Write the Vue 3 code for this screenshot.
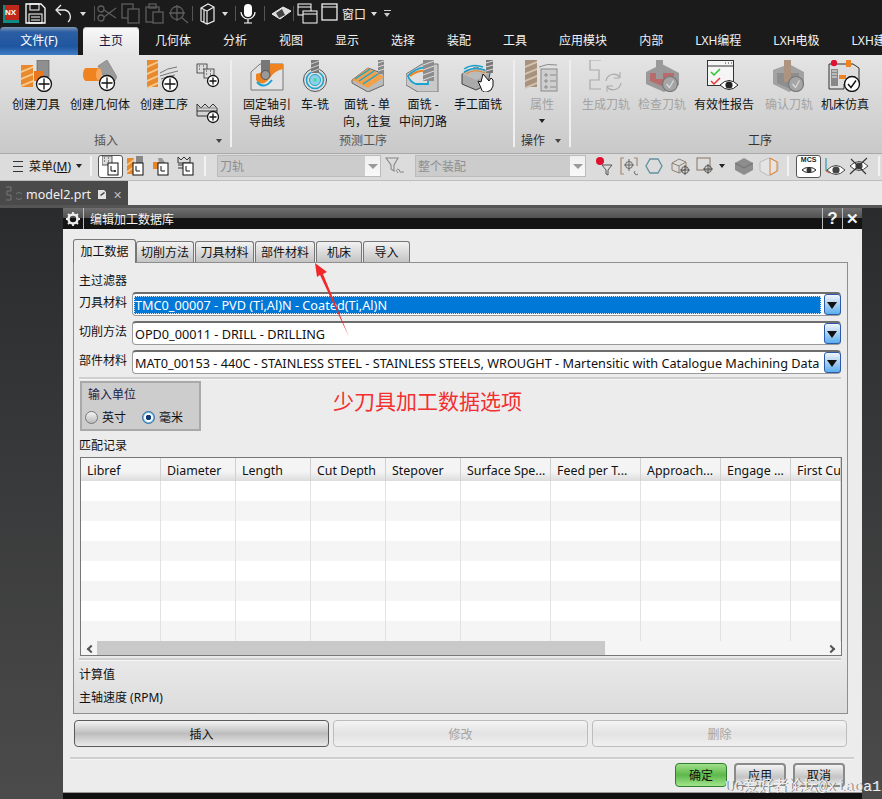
<script setup>
const plus = (x, y, r = 7.5) => `<circle cx="${x}" cy="${y}" r="${r}" fill="#fff" stroke="#111" stroke-width="1.3"/><path d="M${x - r + 2} ${y}H${x + r - 2}M${x} ${y - r + 2}V${y + r - 2}" stroke="#111" stroke-width="1.3"/>`
const check = (x, y, r = 7.5) => `<circle cx="${x}" cy="${y}" r="${r}" fill="#fff" stroke="#111" stroke-width="1.3"/><path d="M${x - 4} ${y}l3 3.5l5-7" fill="none" stroke="#111" stroke-width="1.4"/>`
const grayCheck = (x, y, r = 7.5) => `<circle cx="${x}" cy="${y}" r="${r}" fill="#a5a5a5" stroke="#777" stroke-width="1.2"/><path d="M${x - 3.5} ${y}l3 3.5l4-7" fill="none" stroke="#ddd" stroke-width="1.2"/>`
const mill = (x, y, w, h, c1 = '#e8892b', c2 = '#f8c98c') => {
  let s = `<rect x="${x}" y="${y}" width="${w}" height="${h}" fill="${c1}"/>`
  for (let i = 3; i < h - 2; i += 7) {
    s += `<path d="M${x} ${y + i + 3}L${x + w} ${y + i - 2}V${y + i}L${x} ${y + i + 5}z" fill="${c2}"/>`
  }
  return s
}
const eye = (x, y, c = '#222') => `<path d="M${x - 9} ${y}Q${x} ${y - 9} ${x + 9} ${y}Q${x} ${y + 9} ${x - 9} ${y}z" fill="#fff" stroke="${c}" stroke-width="1"/><circle cx="${x}" cy="${y}" r="3.6" fill="${c}"/>`
const sheet = (x, y) => `<rect x="${x}" y="${y}" width="10" height="9" fill="#ddd" stroke="#333" stroke-width=".8"/><path d="M${x + 2} ${y + 2}h1M${x + 6} ${y + 2}h1M${x + 2} ${y + 5}h1M${x + 6} ${y + 5}h1" stroke="#333"/>`

const icons = {
  createTool: '<g transform="translate(2 0)">' + mill(0, 5, 12, 22) + '<rect x="16" y="0" width="12" height="17" fill="#8f8f8f" stroke="#555" stroke-width=".6"/><path d="M13 11h9v10h-9z" fill="#e8771e"/></g>' + plus(25, 24),
  createGeom: '<path d="M15 6l9-6l10 17l-7 12z" fill="#9b9b9b" stroke="#777" stroke-width=".6"/><path d="M3 8h13a3 7 0 0 1 0 13H3a3 6.5 0 0 1 0-13z" fill="#ef8320"/><ellipse cx="16" cy="14.500" rx="3" ry="6.500" fill="#f7a75c"/>' + plus(24, 23),
  createOp: mill(0, 0, 11, 27) + '<path d="M13 13Q20 8 30 7M13 16Q22 13 31 11M14 19Q22 16 28 15" stroke="#777" fill="none"/>' + plus(23, 24),
  smallSheet: `<path d="M1 1h11v9h9v6h-9v-6h-11z" fill="#ddd"/>` + sheet(1, 1) + sheet(8, 6) + plus(17, 18, 5.500),
  smallCrown: `<path d="M1 5l4 4l4-4l4 4l4-4l4 4V17H1z" fill="none" stroke="#333"/><path d="M1 12h20" stroke="#333"/><path d="M1 9h20" stroke="#888"/>` + plus(17, 18, 5.500),
  contour: '<path d="M1 12L10 4h23v26H1z" fill="#e3e3e3" stroke="#777"/><path d="M6 20Q12 28 20 18Q24 11 33 9V4H18Q14 13 6 14z" fill="#ef8320"/><path d="M7 22Q14 30 22 20" stroke="#1ba3d0" fill="none" stroke-width="2"/><rect x="11" y="0" width="9" height="13" fill="#777"/><circle cx="15.500" cy="15" r="4.500" fill="#999" stroke="#555"/>',
  turnMill: '<g transform="translate(4 0)"><circle cx="13" cy="20" r="11.500" fill="#ddd" stroke="#555"/><circle cx="13" cy="20" r="8.500" fill="none" stroke="#1ba3d0" stroke-width="1.600"/><circle cx="13" cy="20" r="5.500" fill="#8fd0e8" stroke="#1ba3d0"/><circle cx="13" cy="20" r="2" fill="#4da"/><rect x="9" y="0" width="8" height="13" fill="#777"/><path d="M9 4l8-3M9 8l8-3M9 12l8-3" stroke="#ccc"/></g>',
  faceSingle: '<path d="M2 20l16-12l16 6v11l-16 7l-16-9z" fill="#bbb" stroke="#666"/><path d="M2 20l16 8l16-11L18 8z" fill="#f0a14a"/><path d="M5 19L20 9M9 21L24 11M13 24L28 14" stroke="#1ba3d0" stroke-width="1.500"/><rect x="28" y="0" width="6" height="14" fill="#888"/><path d="M28 3l6-2M28 7l6-2M28 11l6-2" stroke="#ddd"/>',
  faceMid: '<path d="M0 14L16 4h16v28H12L0 25z" fill="#c9c9c9" stroke="#777"/><path d="M2 16Q12 6 22 8V24H10Q4 22 2 16z" fill="#e0e0e0" stroke="#1ba3d0" stroke-width="1.800"/><path d="M4 16Q12 10 20 11" stroke="#ef8320" stroke-width="2" fill="none"/><rect x="17" y="0" width="11" height="21" fill="#8c8c8c"/><path d="M17 5l11-4M17 10l11-4M17 15l11-4M17 20l11-4" stroke="#ddd"/>',
  faceManual: '<path d="M1 14l14-7l14 6l-2 11l-12 6L1 24z" fill="#aaa" stroke="#444"/><path d="M1 14l14 6l14-7l-14-6z" fill="#bbb"/><path d="M3 9Q12 3 22 7M3 12Q12 6 24 10" stroke="#1ba3d0" stroke-width="1.500" fill="none"/><path d="M5 14Q14 8 24 13" stroke="#ef8320" fill="none"/><rect x="25" y="0" width="7" height="13" fill="#777"/><path d="M25 3l7-2M25 7l7-2M25 11l7-2" stroke="#ddd"/><path d="M22 14l6 7l2-3l2 2v6q-1 5-6 6t-6-4l-3-7l3 1z" fill="#fff" stroke="#111"/>',
  attrib: mill(0, 0, 12, 27, '#a8917d', '#d2c4b4') + '<rect x="16" y="9" width="16" height="22" fill="#cfcfcf" stroke="#8a8a8a"/><path d="M20 14h2v2h-2zM20 20h2v2h-2zM20 26h2v2h-2zM25 15h6M25 21h6M25 27h6M14 7Q22 3 32 5" stroke="#8a8a8a" fill="none"/>',
  genPath: '<path d="M12 0H1v10h9v10H1v9h11" fill="none" stroke="#a9a9a9" stroke-width="1.200"/><path d="M17 21a8 8 0 0 1 14-4M32 23a8 8 0 0 1-14 4" fill="none" stroke="#a9a9a9" stroke-width="1.200"/><path d="M31 12v6h-6M18 32v-6h6" fill="none" stroke="#a9a9a9"/>',
  verify: '<path d="M1 12l16-8l17 9v12l-15 7L1 24z" fill="#9a9a9a"/><path d="M5 13h24v8l-12 5l-12-5z" fill="#b96b6b"/><rect x="11" y="0" width="7" height="19" fill="#9a9a9a"/>' + grayCheck(25, 24),
  report: '<rect x=".5" y=".5" width="26" height="25" fill="#f5f5f5" stroke="#333"/><path d="M1 6h25M18 3h1M21 3h1M24 3h1" stroke="#333"/><path d="M4 12l3 3l6-6" fill="none" stroke="#28c628" stroke-width="1.500"/><path d="M4 21l3 3l6-6" fill="none" stroke="#e33" stroke-width="1.500"/>' + eye(22, 25),
  confirm: '<path d="M1 10l16-6l15 8v13l-15 7L1 24z" fill="#a2a2a2"/><path d="M5 13h22v10l-11 5l-11-5z" fill="#8e8e8e"/><rect x="12" y="0" width="7" height="22" fill="#ad9480"/>' + grayCheck(24, 24),
  machine: '<path d="M1 4h24l6 4v16H16v5H1z" fill="#ddd" stroke="#333"/><rect x="3" y="9" width="7" height="17" fill="#888"/><path d="M4 11h5M4 14h5M4 17h5" stroke="#eee"/><circle cx="6" cy="3" r="3.200" fill="#e01030"/><rect x="18" y="0" width="5" height="7" fill="#ef8320"/><path d="M11 15h7v4h-7z" fill="#ef8320"/>' + check(24, 24),
  post: '<path d="M1 0h8M1 0v12h8M1 24h8" stroke="#aaa" fill="none"/>',

  logo: '<rect x="0" y="0" width="16" height="18" fill="#0f8a84"/><rect x="2" y="0" width="14" height="15" fill="#c0281c"/>',
  save: '<path d="M1 1h15l4 4v15H1z" fill="none" stroke="#fff" stroke-width="1.300"/><rect x="5" y="1" width="9" height="6" fill="none" stroke="#fff"/><rect x="4" y="11" width="13" height="9" fill="none" stroke="#fff"/><path d="M6 14h9M6 17h9" stroke="#fff"/>',
  undo: '<path d="M2 7h9a7 7 0 0 1 3 12" fill="none" stroke="#eee" stroke-width="1.300"/><path d="M7 2L2 7l5 5" fill="none" stroke="#eee" stroke-width="1.300"/>',
  cut: '<g fill="none" stroke="#5d5d5d" stroke-width="1.300"><circle cx="4" cy="6" r="3"/><circle cx="4" cy="15" r="3"/><path d="M7 7l12 8M7 14L19 5"/></g>',
  copy: '<g fill="none" stroke="#5d5d5d" stroke-width="1.300"><rect x="1" y="1" width="11" height="14"/><rect x="7" y="6" width="11" height="14" fill="#1b1b1b"/></g>',
  paste: '<g fill="none" stroke="#5d5d5d" stroke-width="1.300"><rect x="1" y="4" width="13" height="15"/><rect x="4" y="1" width="7" height="4"/><rect x="8" y="9" width="10" height="11" fill="#1b1b1b"/></g>',
  cross: '<g fill="none" stroke="#5d5d5d" stroke-width="1.300"><circle cx="9" cy="10" r="6.500"/><path d="M1 10h16M9 2v16M13 14l7 6"/></g>',
  box3d: '<path d="M4 5l7-4l6 3v14l-7 3l-6-3zM4 5l6 3v13M10 8l7-4M7 7v12" fill="none" stroke="#eee" stroke-width="1.200"/>',
  mic: '<rect x="7" y="1" width="8" height="13" rx="4" fill="#fff"/><path d="M4 9a7 7 0 0 0 14 0M11 16v4M7 20h8" fill="none" stroke="#fff" stroke-width="1.200"/>',
  eraser: '<path d="M2 11L13 4l8 4l-11 8z" fill="#ddd" stroke="#eee"/><path d="M6 10l6-4l3 6l-6 3zM2 13h3" fill="#444"/>',
  windows: '<rect x="1" y="1" width="13" height="11" fill="#1b1b1b" stroke="#fff"/><path d="M1 4h13" stroke="#fff"/><rect x="6" y="8" width="14" height="12" fill="#1b1b1b" stroke="#fff"/><path d="M6 11h14" stroke="#fff"/>',
  win: '<rect x="1" y="1" width="15" height="16" fill="none" stroke="#fff" stroke-width="1.200"/><path d="M1 4h15" stroke="#fff"/>',

  tbSheet: sheet(0, 0) + '<rect x="6" y="7" width="10" height="12" fill="#fff" stroke="#111"/><path d="M9 10v5h4" fill="none" stroke="#111"/><circle cx="13" cy="15" r="1" fill="#111"/>',
  tbMill: mill(0, 2, 7, 16) + '<rect x="9" y="0" width="7" height="9" fill="#888"/><rect x="6" y="7" width="10" height="12" fill="#fff" stroke="#111"/><path d="M9 10v5h4" fill="none" stroke="#111"/>',
  tbGeom: '<path d="M1 6h7v7H1z" fill="#ef8320"/><path d="M6 2l4 0l4 6v2H8z" fill="#999"/><rect x="6" y="7" width="10" height="12" fill="#fff" stroke="#111"/><path d="M9 10v5h4" fill="none" stroke="#111"/>',
  tbOp: '<path d="M1 1l3 3l3-3l3 3l3-3v6H1zM1 9h9M1 12h6" fill="none" stroke="#333"/><rect x="6" y="7" width="10" height="12" fill="#fff" stroke="#111"/><path d="M9 10v5h4" fill="none" stroke="#111"/>',
  filter: '<path d="M1 2h12l-4 7v6l-3-2V9z" fill="none" stroke="#888" stroke-width="1.100"/><path d="M12 13a3 3 0 0 1 3 3h4M13 17l-2-3" fill="none" stroke="#888"/>',
  redFilter: '<circle cx="5" cy="5" r="4" fill="#e01030"/><path d="M7 9h10l-4 5v5l-2-1v-4z" fill="#ddd" stroke="#555"/>',
  bracket: '<path d="M4 2H1v16h3M14 2h3v8" fill="none" stroke="#a38a75" stroke-width="1.200"/><circle cx="9" cy="9" r="3.500" fill="none" stroke="#666"/><path d="M9 3v12M4 9h10M15 15a2 2 0 1 0 3 3" stroke="#666" fill="none"/>',
  hex: '<path d="M5 3h8l4 7l-4 7H5l-4-7z" fill="none" stroke="#63909e" stroke-width="1.300"/>',
  boxPlus: '<path d="M2 7l7-4l7 3v7l-7 4l-7-3zM2 7l7 3l7-4M9 10v7" fill="none" stroke="#8f7f70"/><circle cx="15" cy="14" r="3.500" fill="none" stroke="#555"/><path d="M15 9v10M10 14h10" stroke="#555"/>',
  squarePlus: '<rect x="2" y="2" width="13" height="12" fill="none" stroke="#8f7f70" stroke-width="1.100"/><circle cx="13" cy="13" r="3.500" fill="none" stroke="#555"/><path d="M13 8v10M8 13h10" stroke="#555"/>',
  cubeDark: '<path d="M10 2l9 5v7l-9 5l-9-5V7z" fill="#8d8d8d"/><path d="M1 7l9 5l9-5" fill="none" stroke="#707070"/>',
  cubeOrange: '<path d="M10 2l9 4v9l-9 5l-9-5V6z" fill="#e4e4e4" stroke="#bbb"/><path d="M11 2l7 4v9l-7 4V9z" fill="none" stroke="#e0812c"/>',
  mcs: '<path d="M3 14a8 5 0 0 1 14 0a8 5 0 0 1-14 0z" fill="#fff" stroke="#222"/><circle cx="10" cy="14" r="2.500" fill="#333"/>',
  axisEye: '<path d="M3 2v13" stroke="#18a" /><path d="M3 15l8-5" stroke="#3a3"/><path d="M3 15l4 2" stroke="#d33"/>' + eye(13, 14, '#444'),
  crossEye: eye(11, 10, '#444') + '<path d="M2 18L19 2M3 3l15 15" stroke="#333" stroke-width="1.100"/>',
}

const quick = [
  { icon: 'save', w: 22, ml: 6 },
  { icon: 'undo', w: 22, ml: 7 },
  { caret: true, ml: 4 },
  { sep: true, ml: 8 },
  { icon: 'cut', w: 22, ml: 2 },
  { icon: 'copy', w: 20, ml: 2 },
  { icon: 'paste', w: 20, ml: 4 },
  { icon: 'cross', w: 21, ml: 3 },
  { sep: true, ml: 3 },
  { icon: 'box3d', w: 20, ml: 4 },
  { caret: true, ml: 5 },
  { sep: true, ml: 7 },
  { icon: 'mic', w: 22, ml: 1 },
  { sep: true, ml: 5 },
  { icon: 'eraser', w: 22, ml: 5 },
  { sep: true, ml: 1 },
  { icon: 'windows', w: 21, ml: 3 },
  { icon: 'win', w: 18, ml: 3 },
]

const menuTabs = ['几何体', '分析', '视图', '显示', '选择', '装配', '工具', '应用模块', '内部', 'LXH编程', 'LXH电极', 'LXH建模']

const groupTool = [
  { icon: 'createTool', label: '创建刀具', w: 64 },
  { icon: 'createGeom', label: '创建几何体', w: 64 },
  { icon: 'createOp', label: '创建工序', w: 64 },
]
const groupPredict = [
  { icon: 'contour', label: '固定轴引\n导曲线', w: 58 },
  { icon: 'turnMill', label: '车-铣', w: 38 },
  { icon: 'faceSingle', label: '面铣 - 单\n向，往复', w: 66 },
  { icon: 'faceMid', label: '面铣 -\n中间刀路', w: 46 },
  { icon: 'faceManual', label: '手工面铣', w: 64 },
]
const groupOps = [
  { icon: 'genPath', label: '生成刀轨', w: 56, off: true },
  { icon: 'verify', label: '检查刀轨', w: 56, off: true },
  { icon: 'report', label: '有效性报告', w: 68 },
  { icon: 'confirm', label: '确认刀轨', w: 62, off: true },
  { icon: 'machine', label: '机床仿真', w: 50 },
  { icon: 'post', label: '后处理', w: 60, off: true },
]

const barLeft = ['tbSheet', 'tbMill', 'tbGeom', 'tbOp']
const barRight = ['redFilter', 'bracket', 'hex', 'boxPlus', 'squarePlus']

const tabs = [
  { label: '加工数据', w: 63, active: true },
  { label: '切削方法', w: 58 },
  { label: '刀具材料', w: 59 },
  { label: '部件材料', w: 60 },
  { label: '机床', w: 46 },
  { label: '导入', w: 47 },
]
const filters = [
  { label: '刀具材料', value: 'TMC0_00007 - PVD (Ti,Al)N - Coated(Ti,Al)N', selected: true },
  { label: '切削方法', value: 'OPD0_00011 - DRILL - DRILLING' },
  { label: '部件材料', value: 'MAT0_00153 - 440C - STAINLESS STEEL - STAINLESS STEELS, WROUGHT - Martensitic with Catalogue Machining Data' },
]
const columns = [
  { label: 'Libref', w: 80 },
  { label: 'Diameter', w: 75 },
  { label: 'Length', w: 75 },
  { label: 'Cut Depth', w: 75 },
  { label: 'Stepover', w: 75 },
  { label: 'Surface Spe...', w: 90 },
  { label: 'Feed per T...', w: 90 },
  { label: 'Approach...', w: 80 },
  { label: 'Engage ...', w: 70 },
  { label: 'First Cu', w: 50 },
]
</script>

<template>
  <div class="app">
    <div class="quick">
      <svg class="logo" width="16" height="18" viewBox="0 0 16 18" v-html="icons.logo"></svg>
      <span class="logo-text">NX</span>
      <template v-for="(q, i) in quick" :key="i">
        <span v-if="q.sep" class="q-sep" :style="{ marginLeft: q.ml + 'px' }"></span>
        <span v-else-if="q.caret" class="caret light" :style="{ marginLeft: q.ml + 'px' }"></span>
        <svg v-else :width="q.w" height="22" :viewBox="`0 0 ${q.w} 22`" :style="{ marginLeft: q.ml + 'px' }" v-html="icons[q.icon]"></svg>
      </template>
      <span class="q-text">窗口</span>
      <span class="caret light q-caret"></span>
      <span class="q-custom"></span>
    </div>

    <div class="menu">
      <div class="file-tab">文件(F)</div>
      <div class="menu-home">主页</div>
      <div v-for="t in menuTabs" :key="t" class="menu-tab">{{ t }}</div>
    </div>

    <div class="ribbon">
      <section class="group g-insert">
        <div class="btns">
          <div v-for="b in groupTool" :key="b.label" class="rbtn" :style="{ width: b.w + 'px' }">
            <svg width="34" height="32" viewBox="0 0 34 32" v-html="icons[b.icon]"></svg>
            <span>{{ b.label }}</span>
          </div>
          <div class="small-col">
            <svg width="24" height="26" viewBox="0 0 24 26" v-html="icons.smallSheet"></svg>
            <svg width="24" height="26" viewBox="0 0 24 26" v-html="icons.smallCrown"></svg>
          </div>
        </div>
        <div class="g-label">插入<span class="caret g-caret"></span></div>
      </section>
      <section class="group g-predict">
        <div class="btns">
          <div v-for="b in groupPredict" :key="b.label" class="rbtn" :style="{ width: b.w + 'px' }">
            <svg width="34" height="32" viewBox="0 0 34 32" v-html="icons[b.icon]"></svg>
            <span>{{ b.label }}</span>
          </div>
        </div>
        <div class="g-label">预测工序</div>
      </section>
      <section class="group g-attr">
        <div class="btns">
          <div class="rbtn off attr-btn">
            <svg width="34" height="32" viewBox="0 0 34 32" v-html="icons.attrib"></svg>
            <span>属性</span>
            <span class="caret attr-caret"></span>
          </div>
        </div>
        <div class="g-label">操作<span class="caret g-caret"></span></div>
      </section>
      <section class="group g-ops">
        <div class="btns">
          <div v-for="b in groupOps" :key="b.label" class="rbtn" :class="{ off: b.off }" :style="{ width: b.w + 'px' }">
            <svg width="34" height="32" viewBox="0 0 34 32" v-html="icons[b.icon]"></svg>
            <span>{{ b.label }}</span>
          </div>
        </div>
        <div class="g-label">工序</div>
      </section>
    </div>

    <div class="toolbar">
      <span class="burger"></span>
      <span class="bar-menu">菜单(<u>M</u>)</span>
      <span class="caret bar-caret"></span>
      <span class="bar-sep sep-a"></span>
      <span v-for="(ic, i) in barLeft" :key="ic" class="bar-icon" :class="{ on: i === 0 }">
        <svg width="18" height="20" viewBox="0 0 18 20" v-html="icons[ic]"></svg>
      </span>
      <span class="bar-sep sep-b"></span>
      <div class="bar-combo c-one"><span>刀轨</span><i></i></div>
      <svg class="bar-filter" width="20" height="20" viewBox="0 0 20 20" v-html="icons.filter"></svg>
      <div class="bar-combo c-two"><span>整个装配</span><i></i></div>
      <span v-for="ic in barRight" :key="ic" class="bar-icon">
        <svg width="21" height="20" viewBox="0 0 21 20" v-html="icons[ic]"></svg>
      </span>
      <span class="caret bar-caret2"></span>
      <span class="bar-icon"><svg width="20" height="20" viewBox="0 0 20 20" v-html="icons.cubeDark"></svg></span>
      <span class="bar-icon"><svg width="20" height="20" viewBox="0 0 20 20" v-html="icons.cubeOrange"></svg></span>
      <span class="bar-sep sep-c"></span>
      <span class="bar-icon mcs">
        <b>MCS</b>
        <svg width="20" height="20" viewBox="0 0 20 20" v-html="icons.mcs"></svg>
      </span>
      <span class="bar-icon"><svg width="22" height="20" viewBox="0 0 22 20" v-html="icons.axisEye"></svg></span>
      <span class="bar-icon"><svg width="22" height="20" viewBox="0 0 22 20" v-html="icons.crossEye"></svg></span>
      <span class="bar-sep sep-d"></span>
    </div>

    <div class="doc-bar">
      <div class="doc-tab">
        <svg width="18" height="18" viewBox="0 0 18 18"><path d="M1 2h5v4H2v4h4v5H1M11 9a4 4 0 0 1 6 0M17 13a4 4 0 0 1-6 0" fill="none" stroke="#777"/></svg>
        <span class="doc-name">model2.prt</span>
        <svg width="10" height="11" viewBox="0 0 10 11"><path d="M1 1h6l2 2v7H1z" fill="#e4e4e4"/><path d="M3 6l4-3l1 1l-4 3z" fill="#444"/></svg>
        <span class="doc-close">✕</span>
      </div>
    </div>

    <main class="canvas">
      <div class="dialog">
        <header class="title">
          <span class="gear">
            <svg width="14" height="14" viewBox="0 0 14 14"><circle cx="7" cy="7" r="4.500" fill="none" stroke="#eee" stroke-width="2.600"/><path d="M7 0v3M7 11v3M0 7h3M11 7h3M2 2l2 2M10 10l2 2M12 2l-2 2M2 12l2-2" stroke="#eee" stroke-width="1.800"/></svg>
          </span>
          <span class="title-text">编辑加工数据库</span>
          <span class="title-btn help">?</span>
          <span class="title-btn close">✕</span>
        </header>

        <div class="body">
          <div class="tabs">
            <div v-for="t in tabs" :key="t.label" class="tab" :class="{ active: t.active }" :style="{ width: t.w + 'px' }">{{ t.label }}</div>
          </div>

          <div class="panel">
            <div class="section-label">主过滤器</div>
            <div v-for="f in filters" :key="f.label" class="filter-row">
              <label>{{ f.label }}</label>
              <div class="combo">
                <div class="combo-value" :class="{ selected: f.selected }">{{ f.value }}</div>
                <span class="combo-arrow"></span>
              </div>
            </div>
            <div class="rule"></div>

            <fieldset class="units">
              <div class="units-title">输入单位</div>
              <div class="units-row">
                <span class="radio"></span><span class="radio-label">英寸</span>
                <span class="radio checked"></span><span class="radio-label">毫米</span>
              </div>
            </fieldset>

            <div class="section-label match">匹配记录</div>

            <div class="table">
              <div class="thead">
                <div v-for="c in columns" :key="c.label" class="th" :style="{ width: c.w + 'px' }">{{ c.label }}</div>
              </div>
              <div v-for="r in 8" :key="r" class="tr" :class="{ even: r % 2 === 0 }">
                <div v-for="c in columns" :key="c.label" class="td" :style="{ width: c.w + 'px' }"></div>
              </div>
              <div class="hscroll">
                <span class="arrow-l"></span>
                <div class="thumb"></div>
                <span class="arrow-r"></span>
              </div>
            </div>
            <div class="rule rule-b"></div>

            <div class="calc">计算值</div>
            <div class="calc spindle">主轴速度 (RPM)</div>
          </div>

          <div class="actions">
            <button class="btn primary">插入</button>
            <button class="btn disabled">修改</button>
            <button class="btn disabled">删除</button>
          </div>
          <div class="rule rule-c"></div>
          <div class="footer">
            <button class="btn small ok">确定</button>
            <button class="btn small">应用</button>
            <button class="btn small">取消</button>
          </div>
        </div>
        <div class="dialog-end"></div>
      </div>
    </main>

    <!-- annotations drawn on top of the screenshot -->
    <svg class="arrow-note" width="40" height="78" viewBox="0 0 40 78">
      <path d="M2 1L14 10L10 12L36 75L7 13L4 15z" fill="#f0282a"/>
    </svg>
    <div class="note">少刀具加工数据选项</div>
    <div class="watermark">UG爱好者论坛@xiaoa1</div>
  </div>
</template>

<style scoped>
.app {
  position: relative;
  width: 882px;
  height: 799px;
  overflow: hidden;
  display: flex;
  flex-direction: column;
  background: #2d2e30;
  color: #111;
  font-family: "Noto Sans", "Noto Sans CJK SC", sans-serif;
  font-size: 12px;
}

/* top quick access */
.quick {
  position: relative;
  height: 27px;
  flex: none;
  display: flex;
  align-items: center;
  padding-left: 3px;
  background: #1b1b1b;
  color: #eee;
}
.logo-text {
  position: absolute;
  left: 5px;
  top: 7px;
  font: bold 8px/11px "Liberation Sans", sans-serif;
  color: #fff;
}
.q-sep {
  width: 1px;
  height: 15px;
  background: #555;
}
.q-text {
  margin-left: 3px;
  color: #eee;
}
.q-caret {
  margin-left: 5px;
}
.q-custom {
  margin-left: 7px;
  width: 7px;
  height: 6px;
  border-top: 1px solid #ccc;
  background: linear-gradient(#1b1b1b 2px, transparent 2px);
  position: relative;
}
.q-custom::after {
  content: "";
  position: absolute;
  left: 0;
  top: 2px;
  border: 3.5px solid transparent;
  border-top: 4px solid #ccc;
  border-bottom: 0;
}
.caret {
  display: inline-block;
  width: 0;
  height: 0;
  border-left: 3.5px solid transparent;
  border-right: 3.5px solid transparent;
  border-top: 4px solid #222;
}
.caret.light {
  border-top-color: #ddd;
}

/* menu tabs */
.menu {
  height: 28px;
  flex: none;
  display: flex;
  align-items: stretch;
  overflow: hidden;
  background: #1b1b1b;
  color: #f2f2f2;
  line-height: 28px;
}
.file-tab {
  flex: none;
  width: 78px;
  text-align: center;
  color: #fff;
  border-radius: 4px 4px 0 0;
  background: linear-gradient(#7e97b4, #2b5ea3 18%, #1f56a0 70%, #3f7ec4);
}
.menu-home {
  flex: none;
  margin-left: 5px;
  width: 56px;
  text-align: center;
  color: #16163c;
  border-radius: 4px 4px 0 0;
  background: linear-gradient(#f8f8f8, #e4e4e4);
  box-shadow: inset 0 1px 0 #bbb;
}
.menu-tab {
  flex: none;
  padding: 0 16px;
  white-space: nowrap;
}

/* ribbon */
.ribbon {
  height: 98px;
  flex: none;
  display: flex;
  overflow: hidden;
  background: linear-gradient(#e4e4e4, #c9c9c9);
}
.group {
  flex: none;
  display: flex;
  flex-direction: column;
  box-sizing: border-box;
  border-right: 2px solid #efefef;
  margin: 5px 0 6px;
}
.g-insert {
  width: 232px;
  padding-left: 4px;
}
.g-predict {
  width: 283px;
  padding-left: 6px;
}
.g-attr {
  width: 56px;
}
.g-ops {
  width: 371px;
  padding-left: 7px;
  border-right: 0;
}
.btns {
  flex: 1;
  display: flex;
  min-height: 0;
}
.rbtn {
  flex: none;
  display: flex;
  flex-direction: column;
  align-items: center;
  text-align: center;
  white-space: pre;
  line-height: 17px;
}
.rbtn svg {
  margin-bottom: 4px;
}
.rbtn.off {
  color: #a3a3a3;
}
.small-col {
  display: flex;
  flex-direction: column;
  gap: 10px;
  padding-top: 3px;
}
.attr-btn {
  width: 54px;
}
.attr-caret {
  margin-top: 6px;
}
.g-label {
  position: relative;
  flex: none;
  height: 14px;
  line-height: 16px;
  text-align: center;
  color: #555;
}
.g-insert .g-label {
  padding-right: 22px;
}
.g-predict .g-label {
  padding-right: 25px;
}
.g-attr .g-label {
  padding-right: 18px;
  color: #333;
}
.g-ops .g-label {
  color: #333;
}
.g-caret {
  position: absolute;
  right: 8px;
  top: 6px;
  border-top-color: #444;
}

/* second toolbar */
.toolbar {
  height: 28px;
  flex: none;
  display: flex;
  align-items: center;
  overflow: hidden;
  padding-bottom: 2px;
  border-top: 1px solid #a9a9a9;
  border-bottom: 1px solid #bdbdbd;
  box-sizing: border-box;
  background: #dcdcdc;
}
.burger {
  margin-left: 13px;
  width: 10px;
  height: 9px;
  flex: none;
  border-top: 1px solid #333;
  border-bottom: 1px solid #333;
  background: linear-gradient(#333, #333) center / 100% 1px no-repeat;
}
.bar-menu {
  margin-left: 6px;
  white-space: nowrap;
  flex: none;
}
.bar-caret {
  margin-left: 5px;
  flex: none;
}
.bar-sep {
  width: 2px;
  height: 20px;
  background: #f2f2f2;
  flex: none;
}
.sep-a {
  margin: 0 6px 0 8px;
}
.sep-b {
  margin-left: 6px;
  margin-right: 11px;
}
.sep-c {
  margin: 0 7px 0 6px;
}
.sep-d {
  margin-left: 7px;
}
.bar-icon {
  position: relative;
  width: 25px;
  height: 23px;
  flex: none;
  display: flex;
  align-items: center;
  justify-content: center;
  box-sizing: border-box;
}
.bar-icon.on {
  background: #fff;
  border: 1px solid #555;
  border-radius: 3px;
}
.bar-combo {
  flex: none;
  height: 22px;
  box-sizing: border-box;
  display: flex;
  align-items: center;
  justify-content: space-between;
  padding-left: 2px;
  border: 1px solid #bbb;
  background: #ccc;
  color: #8e8e8e;
  overflow: hidden;
}
.bar-combo i {
  width: 15px;
  height: 22px;
  background: linear-gradient(#eee, #fafafa);
  position: relative;
}
.bar-combo i::after {
  content: "";
  position: absolute;
  left: 3px;
  top: 9px;
  border-left: 5px solid transparent;
  border-right: 5px solid transparent;
  border-top: 5px solid #999;
}
.c-one {
  width: 164px;
}
.c-two {
  width: 171px;
  margin-right: 7px;
}
.bar-filter {
  margin: 0 10px 0 4px;
  flex: none;
}
.bar-caret2 {
  margin: 0 6px 0 1px;
  flex: none;
}
.mcs {
  flex-direction: column;
  border: 1px solid #555;
  border-radius: 3px;
  background: #fff;
  height: 23px;
  overflow: hidden;
  justify-content: flex-start;
}
.mcs b {
  font: bold 7px/8px "Liberation Sans", sans-serif;
  color: #222;
}
.mcs svg {
  margin-top: -8px;
}

/* document tab */
.doc-bar {
  height: 24px;
  flex: none;
  display: flex;
  background: #e9e9e9;
  border-bottom: 3px solid #555;
}
.doc-tab {
  width: 128px;
  box-sizing: border-box;
  display: flex;
  align-items: center;
  padding: 2px 0 0 5px;
  background: #4a4a4a;
  color: #f0f0f0;
}
.doc-name {
  margin: 0 6px 0 3px;
  font-size: 12.5px;
}
.doc-close {
  margin-left: 6px;
  color: #bdbdbd;
  font-size: 11px;
}

/* canvas + dialog */
.canvas {
  flex: 1;
  min-height: 0;
  padding-left: 63px;
  background: linear-gradient(#2a2b2d, #4b4b4b);
}
.dialog {
  width: 799px;
  height: 591px;
  display: flex;
  flex-direction: column;
  background: #ececec;
}
.title {
  height: 21px;
  flex: none;
  display: flex;
  align-items: center;
  color: #f4f4f4;
  background: linear-gradient(#6f6f6f, #505050 48%, #141414 50%, #141414);
}
.gear {
  width: 21px;
  height: 21px;
  display: flex;
  align-items: center;
  justify-content: center;
  border-right: 1px solid #bbb;
  box-sizing: border-box;
}
.title-text {
  margin-left: 6px;
  flex: 1;
}
.title-btn {
  width: 20px;
  height: 21px;
  text-align: center;
  border-left: 1px solid #bbb;
  box-sizing: border-box;
  font: bold 17px/21px "Liberation Sans", sans-serif;
  color: #f4f4f4;
}
.title-btn.close {
  font-size: 15px;
}
.body {
  flex: 1;
  min-height: 0;
  padding: 10px 0 0 10px;
  background: #ececec;
  display: flex;
  flex-direction: column;
}
.tabs {
  display: flex;
  height: 23px;
  flex: none;
  gap: 1px;
  position: relative;
  z-index: 1;
}
.tab {
  flex: none;
  box-sizing: border-box;
  margin-top: 2px;
  height: 21px;
  line-height: 21px;
  text-align: center;
  border: 1px solid #777;
  border-bottom: 0;
  border-radius: 3px 3px 0 0;
  background: linear-gradient(#f2f2f2, #c4c4c4);
}
.tab.active {
  margin-top: 0;
  height: 24px;
  margin-right: -1px;
  line-height: 23px;
  background: #ececec;
}
.panel {
  width: 775px;
  height: 452px;
  flex: none;
  box-sizing: border-box;
  padding: 9px 5px 0;
  border: 1px solid #8e8e8e;
  background: linear-gradient(#ececec 85%, #dcdcdc);
}
.section-label {
  line-height: 17px;
  height: 20px;
}
.filter-row {
  display: flex;
  align-items: center;
  height: 24px;
  margin-bottom: 5px;
}
.filter-row label {
  width: 53px;
  flex: none;
  padding-bottom: 4px;
}
.combo {
  width: 709px;
  height: 24px;
  box-sizing: border-box;
  display: flex;
  padding: 2px 1px 1px 1px;
  border: 1px solid #9a9a9a;
  border-top: 2px solid #6e6e6e;
  border-radius: 4px;
  background: #fff;
}
.combo-value {
  flex: 1;
  min-width: 0;
  padding-left: 1px;
  white-space: nowrap;
  overflow: hidden;
  line-height: 19px;
  font-size: 12.7px;
  font-family: "Noto Sans", sans-serif;
}
.combo-value.selected {
  background: #0078d7;
  color: #fff;
  outline: 1px dotted #cfe4f5;
  outline-offset: -1px;
}
.combo-arrow {
  position: relative;
  width: 17px;
  flex: none;
  margin: -2px -2px -1px 3px;
  border: 1px solid #2a5aa8;
  border-radius: 3px;
  box-sizing: border-box;
  background: linear-gradient(#f2f6fb, #b9d6f0 40%, #5aaef0);
}
.combo-arrow::after {
  content: "";
  position: absolute;
  left: 2px;
  top: 7px;
  border-left: 5.500px solid transparent;
  border-right: 5.500px solid transparent;
  border-top: 7px solid #111;
}
.rule {
  height: 2px;
  width: 762px;
  background: #cfcfcf;
  border-bottom: 1px solid #f5f5f5;
  margin-top: -2px;
}
.units {
  margin: 1px 0 0 1px;
  padding: 3px 0 0 6px;
  width: 121px;
  height: 50px;
  box-sizing: border-box;
  border: 2px solid #a9a9a9;
  background: #cdcdcd;
}
.units-title {
  line-height: 18px;
  color: #22224a;
}
.units-row {
  display: flex;
  align-items: center;
  margin: 4px 0 0 -3px;
}
.radio {
  width: 11px;
  height: 11px;
  border: 1px solid #777;
  border-radius: 50%;
  background: linear-gradient(#f2f2f2, #bbb);
  flex: none;
}
.radio.checked {
  margin-left: 16px;
  border-color: #3a6a9a;
  background: radial-gradient(circle, #123a7a 0 2.500px, #fff 3px 4px, #6fc1ee 5px);
}
.radio-label {
  margin-left: 4px;
}
.match {
  margin-top: 6px;
  height: 20px;
}
.table {
  width: 762px;
  height: 199px;
  margin-left: 1px;
  box-sizing: border-box;
  border: 1px solid #777;
  background: #f5f5f5;
  overflow: hidden;
}
.thead {
  display: flex;
  height: 23px;
}
.th {
  flex: none;
  box-sizing: border-box;
  padding: 3px 0 0 6px;
  line-height: 19px;
  white-space: nowrap;
  overflow: hidden;
  border-right: 1px solid #d0d0d0;
  background: linear-gradient(#f4f4f4 60%, #dcdcdc);
  font-size: 12.4px;
  font-family: "Noto Sans", sans-serif;
}
.tr {
  display: flex;
  height: 20px;
  background: #fff;
}
.tr.even {
  background: #f5f5f5;
}
.td {
  flex: none;
  box-sizing: border-box;
  border-right: 1px solid #e2e2e2;
}
.hscroll {
  display: flex;
  align-items: center;
  height: 15px;
  background: #f5f5f5;
}
.thumb {
  width: 508px;
  height: 15px;
  margin-left: 3px;
  background: #c9c9c9;
}
.arrow-l,
.arrow-r {
  width: 6px;
  height: 6px;
  margin-left: 7px;
  border-left: 2px solid #555;
  border-bottom: 2px solid #555;
  transform: rotate(45deg);
  flex: none;
  box-sizing: border-box;
}
.arrow-r {
  margin-left: auto;
  margin-right: 7px;
  transform: rotate(225deg);
}
.rule-b {
  margin-top: 2px;
}
.calc {
  margin-top: 5px;
  line-height: 17px;
}
.spindle {
  margin-top: 6px;
}
.actions {
  display: flex;
  gap: 4px;
  margin: 6px 0 0 1px;
  flex: none;
}
.btn {
  width: 255px;
  height: 27px;
  padding: 0;
  border: 1px solid #bdbdbd;
  border-radius: 4px;
  font: inherit;
  color: #111;
  background: linear-gradient(#f4f4f4, #e3e3e3 50%, #f0f0f0);
}
.btn.primary {
  border: 1px solid #5a5a5a;
  background: linear-gradient(#f4f4f4, #bdbdbd 50%, #eaeaea);
}
.btn.disabled {
  color: #a5a5a5;
}
.rule-c {
  width: 784px;
  margin: 10px 0 0 -3px;
  flex: none;
}
.footer {
  display: flex;
  justify-content: flex-end;
  gap: 7px;
  width: 772px;
  margin-top: 3px;
  flex: none;
}
.btn.small {
  width: 52px;
  height: 24px;
  border: 2px solid #8a8a8a;
  background: linear-gradient(#f4f4f4, #c4c4c4 60%, #e4e4e4);
}
.btn.ok {
  border: 1px solid #2f7d2f;
  background: linear-gradient(#9fe08a, #5db84a 50%, #a3e58d);
}
.dialog-end {
  height: 6px;
  flex: none;
  background: #111;
  border-top: 1px solid #9a9a9a;
}

/* overlay marks */
.arrow-note {
  position: absolute;
  left: 313px;
  top: 262px;
}
.note {
  position: absolute;
  left: 333px;
  top: 386px;
  font-size: 21px;
  line-height: 28px;
  color: #f23030;
  font-family: "Noto Sans CJK SC", sans-serif;
}
.watermark {
  position: absolute;
  left: 725px;
  top: 780px;
  font: 15px/15px "Liberation Mono", "Noto Sans CJK SC", monospace;
  color: #eee;
  text-shadow: 1px 0 0 #777;
  white-space: nowrap;
}
</style>

<style>
body {
  margin: 0;
}
</style>
